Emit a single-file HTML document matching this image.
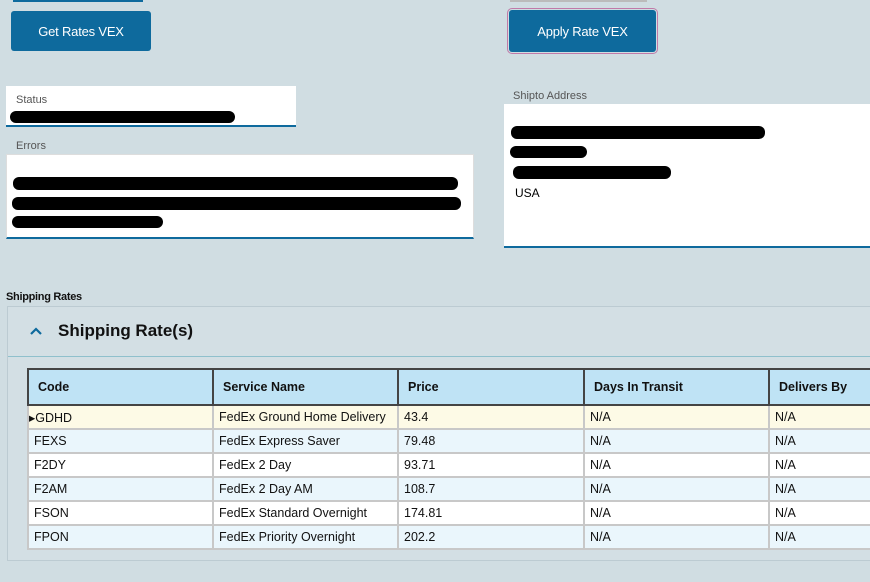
<!DOCTYPE html>
<html><head><style>
*{box-sizing:border-box;margin:0;padding:0}
body{width:870px;height:582px;background:#d0dde2;font-family:"Liberation Sans",sans-serif;position:relative;overflow:hidden}
.a{position:absolute}
.btn{background:#0e6a9d;color:#fff;font-size:13px;display:flex;align-items:center;justify-content:center;border-radius:3px;letter-spacing:-0.2px}
.lbl{font-size:11px;color:#555}
.r{background:#000;border-radius:6px;height:11px;position:absolute}
table{border-collapse:collapse;font-size:12.5px;position:absolute;left:27px;top:368px;table-layout:fixed;width:860px}
th{background:#bfe3f5;border:2px solid #444;height:36px;text-align:left;padding-left:9px;font-weight:bold;font-size:12.5px;color:#111}
td{border:2px solid #c8c8c8;height:24px;padding-left:5px;color:#111}
tr.c td{background:#fdfae6}
tr.b td{background:#eaf6fc}
tr.w td{background:#fff}
</style></head><body>
<div class="a" style="left:13px;top:0;width:130px;height:2px;background:#0e6a9d"></div>
<div class="a" style="left:510px;top:0;width:137px;height:2px;background:#bbb"></div>
<div class="a btn" style="left:11px;top:11px;width:140px;height:40px">Get Rates VEX</div>
<div class="a" style="left:507px;top:8px;width:151px;height:46px;border:1px solid #c07aa8;border-radius:5px"></div>
<div class="a btn" style="left:509px;top:10px;width:147px;height:42px">Apply Rate VEX</div>

<div class="a" style="left:6px;top:86px;width:290px;height:41px;background:#fff;border-bottom:2px solid #0e6a9d"></div>
<div class="a lbl" style="left:16px;top:94px">Status</div>
<div class="r" style="left:10px;top:111px;width:225px;height:12px"></div>

<div class="a lbl" style="left:16px;top:140px">Errors</div>
<div class="a" style="left:6px;top:154px;width:468px;height:85px;background:#fff;border:1px solid #ddd;border-bottom:2px solid #0e6a9d"></div>
<div class="r" style="left:13px;top:177px;width:445px;height:13px"></div>
<div class="r" style="left:12px;top:197px;width:449px;height:13px"></div>
<div class="r" style="left:12px;top:216px;width:151px;height:12px"></div>

<div class="a lbl" style="left:513px;top:90px">Shipto Address</div>
<div class="a" style="left:504px;top:104px;width:366px;height:144px;background:#fff;border-bottom:2px solid #0e6a9d"></div>
<div class="r" style="left:511px;top:126px;width:254px;height:13px"></div>
<div class="r" style="left:510px;top:146px;width:77px;height:12px"></div>
<div class="r" style="left:513px;top:166px;width:158px;height:13px"></div>
<div class="a" style="left:515px;top:186px;font-size:12px">USA</div>

<div class="a" style="left:6px;top:291px;font-size:11px;font-weight:bold;color:#111;letter-spacing:-0.3px">Shipping Rates</div>
<div class="a" style="left:7px;top:306px;width:870px;height:255px;border:1px solid #bccbd2;background:#d3dfe4"></div>
<div class="a" style="left:8px;top:356px;width:862px;height:1px;background:#8fc0cc"></div>
<svg class="a" style="left:29px;top:326px" width="14" height="10"><path d="M2 8 L7 3 L12 8" stroke="#0e6a9d" stroke-width="2.2" fill="none"/></svg>
<div class="a" style="left:58px;top:321px;font-size:17px;font-weight:bold;color:#111">Shipping Rate(s)</div>

<table>
<colgroup><col style="width:185px"><col style="width:185px"><col style="width:186px"><col style="width:185px"><col style="width:119px"></colgroup>
<tr><th>Code</th><th>Service Name</th><th>Price</th><th>Days In Transit</th><th>Delivers By</th></tr>
<tr class="c"><td style="padding-left:0">&#9656;GDHD</td><td>FedEx Ground Home Delivery</td><td>43.4</td><td>N/A</td><td>N/A</td></tr>
<tr class="b"><td>FEXS</td><td>FedEx Express Saver</td><td>79.48</td><td>N/A</td><td>N/A</td></tr>
<tr class="w"><td>F2DY</td><td>FedEx 2 Day</td><td>93.71</td><td>N/A</td><td>N/A</td></tr>
<tr class="b"><td>F2AM</td><td>FedEx 2 Day AM</td><td>108.7</td><td>N/A</td><td>N/A</td></tr>
<tr class="w"><td>FSON</td><td>FedEx Standard Overnight</td><td>174.81</td><td>N/A</td><td>N/A</td></tr>
<tr class="b"><td>FPON</td><td>FedEx Priority Overnight</td><td>202.2</td><td>N/A</td><td>N/A</td></tr>
</table>
</body></html>
